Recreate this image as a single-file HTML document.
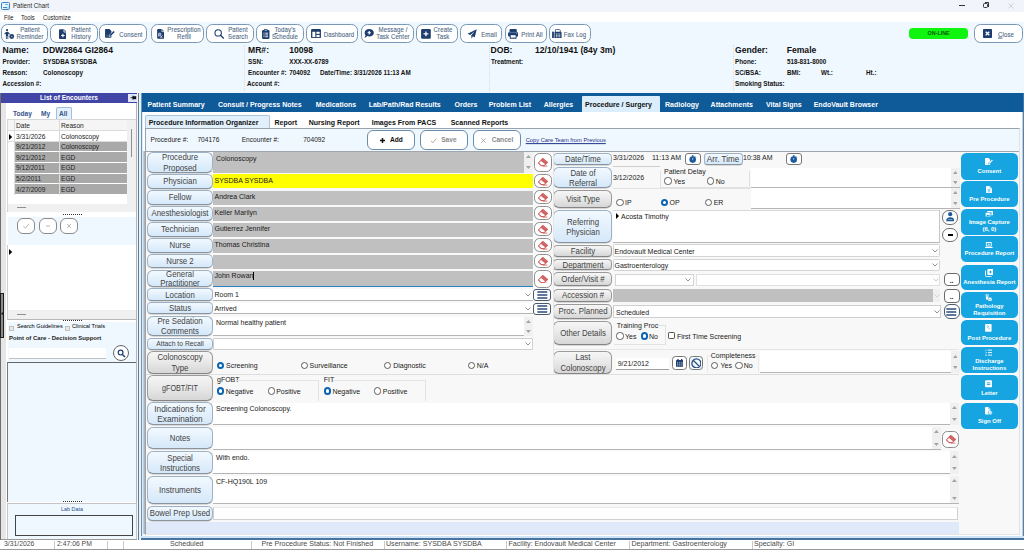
<!DOCTYPE html><html><head><meta charset="utf-8"><title>Patient Chart</title><style>
*{box-sizing:border-box;margin:0;padding:0}
html,body{width:1024px;height:550px;overflow:hidden;background:#f0f8ff;font-family:"Liberation Sans",sans-serif;}
body{position:relative}
div,span{position:absolute}
span{white-space:nowrap;transform:translateY(-50%);line-height:1;color:#1a1a1a}
.t{font-size:7px}
.b{font-weight:bold}
.tb{background:#fff;border:1px solid #7a97b3;border-radius:6.5px}
.tbt{font-size:6.5px;color:#4d6985;-webkit-text-stroke:0.1px #4d6985;letter-spacing:.12px;text-align:center;line-height:6.9px;transform:translate(-50%,-50%) scaleX(.93)}
.h1{font-size:8.6px;font-weight:bold;color:#111}
.h2{font-size:6.3px;font-weight:bold;color:#111}
.mt{font-size:7px;font-weight:bold;color:#fff}
.st{font-size:7px;font-weight:bold;color:#111}
.lb{background:linear-gradient(#f2f9ff,#e5f1fc 45%,#d5e8f9);border:1px solid #9db1c6;border-bottom-color:#8a949e;border-radius:6px;box-shadow:0 .6px 0 rgba(140,140,140,.55)}
.lg{background:linear-gradient(#f6f6f6,#e8e8e8 50%,#d6d6d6);border:1px solid #9a9a9a;border-bottom-color:#858585;border-radius:6px;box-shadow:0 .6px 0 rgba(130,130,130,.55)}
.lt{font-size:8.7px;color:#424242;text-align:center;line-height:10.2px;transform:translate(-50%,-50%) scaleX(.9)}
.fg{background:#c0c0c0}
.fw{background:#fff;border-bottom:1px solid #b5b5b5}
.er{background:#fff;border:1px solid #8e8e8e;border-radius:5.5px}
.sb{background:#16a5e0;border-radius:5.5px}
.sbt{font-size:5.9px;font-weight:bold;color:#fff;text-align:center;line-height:6.4px;transform:translate(-50%,-50%)}
.rad{border:.75px solid #5c5c5c;border-radius:50%;background:#fff}
.radc{border:2.2px solid #0a64b4;border-radius:50%;background:#fff}
.sc{background:#f0f0f0}
.ar{font-size:5.6px;color:#a6a6a6;transform:translate(-50%,-50%) scaleY(.75) !important}
</style></head><body>
<div class="" style="left:0px;top:0px;width:1024px;height:12px;background:#f1f4fa"></div>
<div class="" style="left:1px;top:1.8px;width:8.8px;height:8.4px;border:1px solid #3a86c4;border-radius:1.6px;background:linear-gradient(135deg,#cfeaff,#f4fbff 50%,#9fd0f0)"></div>
<div class="" style="left:2.6px;top:6.6px;width:4.4px;height:1px;background:#3a86c4"></div>
<div class="" style="left:5.4px;top:4px;width:2.4px;height:1px;background:#6ab0e0"></div>
<span class="t" style="left:12.6px;top:6.2px;font-size:6.7px;color:#2a2a2a;transform-origin:0 50%;transform:translateY(-50%) scaleX(.92)">Patient Chart</span>
<div class="" style="left:959.4px;top:5px;width:5.4px;height:0.8px;background:#333"></div>
<div class="" style="left:983px;top:3.4px;width:5px;height:4.6px;border:1px solid #333;border-radius:1.4px"></div>
<div class="" style="left:984.6px;top:2.4px;width:4.6px;height:4.4px;border-top:1px solid #333;border-right:1px solid #333;border-radius:0 1.4px 0 0"></div>
<svg style="position:absolute;left:1008px;top:3px" width="6" height="6"><path d="M0.4 0.4L5.4 5.4M5.4 0.4L0.4 5.4" stroke="#c4c4c4" stroke-width="0.8"/></svg>
<div class="" style="left:0px;top:11.8px;width:1024px;height:10.5px;background:#fff"></div>
<span class="t" style="left:3.8px;top:17.5px;font-size:6.7px;color:#222;transform-origin:0 50%;transform:translateY(-50%) scaleX(.88)">File</span>
<span class="t" style="left:21.4px;top:17.5px;font-size:6.7px;color:#222;transform-origin:0 50%;transform:translateY(-50%) scaleX(.88)">Tools</span>
<span class="t" style="left:42.8px;top:17.5px;font-size:6.7px;color:#222;transform-origin:0 50%;transform:translateY(-50%) scaleX(.88)">Customize</span>
<div class="tb" style="left:0.5px;top:24.1px;width:47.4px;height:18.7px;"></div>
<span class="tbt" style="left:29.8px;top:33.8px;">Patient<br>Reminder</span>
<svg style="position:absolute;left:4.2px;top:28.6px" width="10.4" height="10" viewBox="0 0 21 20"><circle cx="6.2" cy="2.2" r="2.1" fill="#1d3d6e"/><path d="M0.4 9.6L3.4 6.4Q6.2 4.6 9 6.4L12 9.6L10.4 10.8L8.6 9V20H6.9V14H5.5V20H3.8V9L2 10.8Z" fill="#1d3d6e"/><circle cx="15.6" cy="15" r="4.9" fill="#1d3d6e"/><circle cx="15.6" cy="15" r="1.7" fill="#93a6c4"/></svg>
<div class="tb" style="left:49.6px;top:24.1px;width:48.1px;height:18.7px;"></div>
<span class="tbt" style="left:81px;top:33.8px;">Patient<br>History</span>
<svg style="position:absolute;left:58.6px;top:28.6px" width="7.8" height="10.2" viewBox="0 0 16 20"><path d="M2 0H10L16 6V18A2 2 0 0 1 14 20H2A2 2 0 0 1 0 18V2A2 2 0 0 1 2 0Z" fill="#1d3d6e"/><path d="M10.2 0.6V5.8H15.4" fill="none" stroke="#fff" stroke-width="1.6"/><path d="M8 9.5V16.5M4.5 13H11.5" stroke="#fff" stroke-width="2.2"/></svg>
<div class="tb" style="left:99.3px;top:24.1px;width:47.8px;height:18.7px;"></div>
<span class="tbt" style="left:130.5px;top:34.5px;">Consent</span>
<svg style="position:absolute;left:105px;top:29.4px" width="10.4" height="8.8" viewBox="0 0 21 18"><path d="M1.6 0H9L13 4V16.4A1.6 1.6 0 0 1 11.4 18H1.6A1.6 1.6 0 0 1 0 16.4V1.6A1.6 1.6 0 0 1 1.6 0Z" fill="#1d3d6e"/><path d="M8.4 15.8L9.4 11.6L17.6 3.4L20.4 6.2L12.2 14.4Z" fill="#1d3d6e" stroke="#fff" stroke-width="1"/><path d="M2 14.6C3.4 12 4.4 15.4 5.6 13.4S7 15 8 14.2" fill="none" stroke="#9fb2d0" stroke-width="1"/></svg>
<div class="tb" style="left:151.4px;top:24.1px;width:52.9px;height:18.7px;"></div>
<span class="tbt" style="left:183.5px;top:33.8px;">Prescription<br>Refill</span>
<svg style="position:absolute;left:156.9px;top:29px" width="7.5" height="9.7" viewBox="0 0 15 20"><path d="M2 0H9.5L15 5.5V18A2 2 0 0 1 13 20H2A2 2 0 0 1 0 18V2A2 2 0 0 1 2 0Z" fill="#1d3d6e"/><path d="M9.8 0.6V5.4H14.6" fill="none" stroke="#fff" stroke-width="1.4"/><path d="M3.4 16V8.6H6A2 2 0 0 1 6 12.6H3.4M5.6 12.6L10.8 18.2M10.8 13.4L6.8 18.2" fill="none" stroke="#fff" stroke-width="1.5"/></svg>
<div class="tb" style="left:206.4px;top:24.1px;width:47.9px;height:18.7px;"></div>
<span class="tbt" style="left:237.8px;top:33.8px;">Patient<br>Search</span>
<svg style="position:absolute;left:213.9px;top:29px" width="10.3" height="9.7" viewBox="0 0 20 20"><circle cx="8" cy="8" r="6.6" fill="none" stroke="#1d3d6e" stroke-width="2.2"/><path d="M12.8 12.8L19 19" stroke="#1d3d6e" stroke-width="2.6" stroke-linecap="round"/></svg>
<div class="tb" style="left:256.3px;top:24.1px;width:47.4px;height:18.7px;"></div>
<span class="tbt" style="left:285.4px;top:33.8px;"><u>T</u>oday's<br>Schedule</span>
<svg style="position:absolute;left:262px;top:29px" width="7.5" height="9.9" viewBox="0 0 15 20"><rect x="0" y="2" width="15" height="18" rx="2.4" fill="#1d3d6e"/><rect x="4" y="0" width="7" height="4.4" rx="1.4" fill="#1d3d6e"/><rect x="5.4" y="1.6" width="4.2" height="1.6" fill="#fff"/><path d="M3 8.4H5M6.6 8.4H12M3 12H5M6.6 12H12M3 15.6H5M6.6 15.6H12" stroke="#fff" stroke-width="1.8"/></svg>
<div class="tb" style="left:305.8px;top:24.1px;width:52.4px;height:18.7px;"></div>
<span class="tbt" style="left:339px;top:34.5px;">Dashboard</span>
<svg style="position:absolute;left:311.1px;top:29px" width="10" height="9.4" viewBox="0 0 20 19"><rect x="0" y="0" width="20" height="19" rx="2.6" fill="#1d3d6e"/><rect x="2.6" y="5.6" width="6" height="10.8" fill="#fff"/><rect x="10.8" y="5.6" width="6.6" height="4.2" fill="#fff"/><rect x="10.8" y="12" width="6.6" height="4.4" fill="#fff"/></svg>
<div class="tb" style="left:360.5px;top:24.1px;width:53.0px;height:18.7px;"></div>
<span class="tbt" style="left:393px;top:33.8px;">Message /<br>Task Center</span>
<svg style="position:absolute;left:364.3px;top:29.3px" width="9.9" height="8.8" viewBox="0 0 20 18"><path d="M10.6 0C15.8 0 20 3.4 20 7.6S15.8 15.2 10.6 15.2C9.2 15.2 7.9 15 6.7 14.5C5.4 16 3.2 17.6 0.6 17.8C2 16.4 2.8 14.6 3 13C1.8 11.6 1.2 9.7 1.2 7.6C1.2 3.4 5.4 0 10.6 0Z" fill="#1d3d6e"/><path d="M10.6 4.2V11M7.2 7.6H14" stroke="#fff" stroke-width="2.4"/></svg>
<div class="tb" style="left:415.5px;top:24.1px;width:42.5px;height:18.7px;"></div>
<span class="tbt" style="left:443px;top:33.8px;">Create<br>Task</span>
<svg style="position:absolute;left:420.9px;top:29px" width="9.9" height="9.7" viewBox="0 0 20 20"><rect x="0" y="0" width="20" height="20" rx="2.6" fill="#1d3d6e"/><path d="M10 5V15M5 10H15" stroke="#fff" stroke-width="2.6"/></svg>
<div class="tb" style="left:460.1px;top:24.1px;width:42.4px;height:18.7px;"></div>
<span class="tbt" style="left:488.5px;top:34.5px;">Email</span>
<svg style="position:absolute;left:466.5px;top:29px" width="10.2" height="9.7" viewBox="0 0 20 20"><path d="M19.6 0.4L0.6 9.6L6.2 12.2L15.4 4.4L8.2 13.4L8.8 19.6L11.8 15.2L15.4 17.4Z" fill="#1d3d6e"/></svg>
<div class="tb" style="left:504.5px;top:24.1px;width:42.2px;height:18.7px;"></div>
<span class="tbt" style="left:531.6px;top:34.5px;">Print All</span>
<svg style="position:absolute;left:508px;top:29px" width="10.3" height="9.7" viewBox="0 0 21 20"><path d="M4.4 0H16.6L18 1.8V6H3V1.8Z" fill="#1d3d6e"/><rect x="0" y="6.6" width="21" height="9" rx="2.4" fill="#1d3d6e"/><rect x="3.4" y="11" width="14.2" height="9" rx="1" fill="#1d3d6e"/><rect x="5.4" y="12.8" width="10.2" height="5" fill="#fff"/><circle cx="17.6" cy="9" r="0.9" fill="#fff"/></svg>
<div class="tb" style="left:548.5px;top:24.1px;width:42.3px;height:18.7px;"></div>
<span class="tbt" style="left:575.3px;top:34.5px;">Fax Log</span>
<svg style="position:absolute;left:552.3px;top:28.7px" width="9.7" height="9.5" viewBox="0 0 20 20"><rect x="0" y="5" width="3.8" height="15" rx="1.4" fill="#1d3d6e"/><path d="M7 6V2.4A1.8 1.8 0 0 1 8.8 0.8H15L17.2 3V6" fill="none" stroke="#1d3d6e" stroke-width="1.8"/><rect x="5" y="6" width="15" height="14" rx="1.8" fill="#1d3d6e"/><path d="M8 10.4H10.4M11.4 10.4H13.8M14.8 10.4H17.2M8 13.4H10.4M11.4 13.4H13.8M14.8 13.4H17.2M8 16.4H10.4M11.4 16.4H13.8M14.8 16.4H17.2" stroke="#fff" stroke-width="1.6"/></svg>
<div class="tb" style="left:974px;top:24.1px;width:48.9px;height:18.7px;"></div>
<span class="tbt" style="left:1006px;top:34.5px;"><u>C</u>lose</span>
<svg style="position:absolute;left:982.5px;top:29.2px" width="9" height="9" viewBox="0 0 18 18"><rect x="0" y="0" width="18" height="18" rx="1.6" fill="#1d3d6e"/><path d="M5.4 5.4L12.6 12.6M12.6 5.4L5.4 12.6" stroke="#fff" stroke-width="2.6"/></svg>
<div class="" style="left:909px;top:28.2px;width:58.6px;height:10.5px;background:#10f510;border-radius:4px"></div>
<span class="t" style="left:938.6px;top:34.2px;font-size:5.35px;font-weight:bold;color:#0a5a0a;transform:translate(-50%,-50%)">ON-LINE</span>
<span class="h1" style="left:2.5px;top:49.8px;">Name:</span>
<span class="h1" style="left:42.7px;top:49.8px;">DDW2864 GI2864</span>
<span class="h2" style="left:2.5px;top:61.8px;">Provider:</span>
<span class="h2" style="left:43px;top:61.8px;">SYSDBA SYSDBA</span>
<span class="h2" style="left:2.5px;top:72.7px;">Reason:</span>
<span class="h2" style="left:43px;top:72.7px;">Colonoscopy</span>
<span class="h2" style="left:2.5px;top:83.5px;">Accession #:</span>
<span class="h1" style="left:248px;top:49.8px;">MR#:</span>
<span class="h1" style="left:289.2px;top:49.8px;">10098</span>
<span class="h2" style="left:248px;top:61.8px;">SSN:</span>
<span class="h2" style="left:289.2px;top:61.8px;">XXX-XX-6789</span>
<span class="h2" style="left:248px;top:72.7px;">Encounter #:</span>
<span class="h2" style="left:289.2px;top:72.7px;">704092</span>
<span class="h2" style="left:320px;top:72.7px;">Date/Time: 3/31/2026 11:13 AM</span>
<span class="h2" style="left:247px;top:83.5px;">Account #:</span>
<span class="h1" style="left:490.5px;top:49.8px;">DOB:</span>
<span class="h1" style="left:535px;top:49.8px;">12/10/1941 (84y 3m)</span>
<span class="h2" style="left:491px;top:61.8px;">Treatment:</span>
<span class="h1" style="left:735px;top:49.8px;">Gender:</span>
<span class="h1" style="left:786.7px;top:49.8px;">Female</span>
<span class="h2" style="left:735px;top:61.8px;">Phone:</span>
<span class="h2" style="left:787px;top:61.8px;">518-831-8000</span>
<span class="h2" style="left:735px;top:72.7px;">SC/BSA:</span>
<span class="h2" style="left:787px;top:72.7px;">BMI:</span>
<span class="h2" style="left:821px;top:72.7px;">Wt.:</span>
<span class="h2" style="left:866px;top:72.7px;">Ht.:</span>
<span class="h2" style="left:735px;top:83.5px;">Smoking Status:</span>
<div class="" style="left:244px;top:45px;width:1px;height:46px;border-left:1px dotted #d4dde8"></div>
<div class="" style="left:488.5px;top:45px;width:1px;height:46px;border-left:1px dotted #d4dde8"></div>
<div class="" style="left:732.5px;top:45px;width:1px;height:46px;border-left:1px dotted #d4dde8"></div>
<div class="" style="left:0px;top:93px;width:1.2px;height:447px;background:#6e6e6e"></div>
<div class="" style="left:1px;top:93px;width:5px;height:447px;background:#e6e6e6"></div>
<div class="" style="left:6px;top:103px;width:132px;height:437px;background:#fff"></div>
<div class="" style="left:0.6px;top:93px;width:137.8px;height:10px;background:#4146a6"></div>
<span class="t" style="left:69px;top:98px;font-size:6.6px;font-weight:bold;color:#fff;transform:translate(-50%,-50%)">List of Encounters</span>
<div class="" style="left:128px;top:94px;width:9.6px;height:7.6px;background:#e0e4f8"></div>
<svg style="position:absolute;left:129.6px;top:95.2px" width="7" height="5.4" viewBox="0 0 7 5.4"><path d="M0.6 2.6H3M2.8 0.6V4.8" stroke="#111" stroke-width="0.8"/><rect x="3" y="1.2" width="3.2" height="3" fill="#111"/></svg>
<span class="t" style="left:13px;top:113.5px;font-size:6.6px;font-weight:bold;color:#34548a">Today</span>
<span class="t" style="left:41px;top:113.5px;font-size:6.6px;font-weight:bold;color:#34548a">My</span>
<div class="" style="left:56px;top:107px;width:16px;height:13px;background:#e4f0fb;border:1px solid #9cc0e0;border-bottom:none;border-radius:2px 2px 0 0"></div>
<span class="t" style="left:59px;top:113.5px;font-size:6.6px;font-weight:bold;color:#34548a">All</span>
<div class="" style="left:7px;top:119px;width:130px;height:93px;border:1px solid #d6d6d6;border-bottom-color:#bcbcbc;background:#fff"></div>
<div class="" style="left:8px;top:120px;width:128px;height:11px;background:#f5f5f5;border-bottom:1px solid #dcdcdc"></div>
<span class="t" style="left:16px;top:125.5px;font-size:6.6px;color:#222">Date</span>
<span class="t" style="left:61px;top:125.5px;font-size:6.6px;color:#222">Reason</span>
<span class="t" style="left:16px;top:136.7px;font-size:6.6px;color:#222">3/31/2026</span>
<span class="t" style="left:61px;top:136.7px;font-size:6.6px;color:#222">Colonoscopy</span>
<div class="" style="left:8px;top:141px;width:119px;height:1px;background:#dcdcdc"></div>
<div class="" style="left:14.5px;top:142px;width:44.5px;height:9px;background:#a9a9a9"></div>
<div class="" style="left:60px;top:142px;width:67px;height:9px;background:#a9a9a9"></div>
<span class="t" style="left:16px;top:147.28px;font-size:6.6px;color:#222">9/21/2012</span>
<span class="t" style="left:61px;top:147.28px;font-size:6.6px;color:#222">Colonoscopy</span>
<div class="" style="left:14.5px;top:152px;width:44.5px;height:10px;background:#a9a9a9"></div>
<div class="" style="left:60px;top:152px;width:67px;height:10px;background:#a9a9a9"></div>
<span class="t" style="left:16px;top:157.85999999999999px;font-size:6.6px;color:#222">9/21/2012</span>
<span class="t" style="left:61px;top:157.85999999999999px;font-size:6.6px;color:#222">EGD</span>
<div class="" style="left:14.5px;top:163px;width:44.5px;height:10px;background:#a9a9a9"></div>
<div class="" style="left:60px;top:163px;width:67px;height:10px;background:#a9a9a9"></div>
<span class="t" style="left:16px;top:168.44px;font-size:6.6px;color:#222">9/12/2011</span>
<span class="t" style="left:61px;top:168.44px;font-size:6.6px;color:#222">EGD</span>
<div class="" style="left:14.5px;top:174px;width:44.5px;height:9px;background:#a9a9a9"></div>
<div class="" style="left:60px;top:174px;width:67px;height:9px;background:#a9a9a9"></div>
<span class="t" style="left:16px;top:179.01999999999998px;font-size:6.6px;color:#222">5/2/2011</span>
<span class="t" style="left:61px;top:179.01999999999998px;font-size:6.6px;color:#222">EGD</span>
<div class="" style="left:14.5px;top:184px;width:44.5px;height:10px;background:#a9a9a9"></div>
<div class="" style="left:60px;top:184px;width:67px;height:10px;background:#a9a9a9"></div>
<span class="t" style="left:16px;top:189.6px;font-size:6.6px;color:#222">4/27/2009</span>
<span class="t" style="left:61px;top:189.6px;font-size:6.6px;color:#222">EGD</span>
<div class="" style="left:14px;top:120px;width:0.6px;height:75px;background:#dcdcdc"></div>
<div class="" style="left:59px;top:120px;width:0.6px;height:75px;background:#dcdcdc"></div>
<svg style="position:absolute;left:9px;top:133.5px" width="4" height="6"><path d="M0 0L3.2 3L0 6Z" fill="#000"/></svg>
<div class="" style="left:127px;top:120px;width:9px;height:84px;background:#f0f0f0"></div>
<div class="" style="left:131px;top:129px;width:1px;height:28px;background:#909090"></div>
<div class="" style="left:8px;top:204px;width:128px;height:8px;background:#f0f0f0"></div>
<div class="" style="left:17px;top:207px;width:9px;height:1px;background:#909090"></div>
<div class="" style="left:63px;top:213.7px;width:19px;height:1px;border-top:1px dotted #333"></div>
<div class="" style="left:8px;top:217px;width:128px;height:28.4px;background:#f0f8ff"></div>
<div class="" style="left:17px;top:218px;width:18px;height:16px;background:#fff;border:1px solid #8a8a8a;border-radius:6px"></div>
<svg style="position:absolute;left:21px;top:221px" width="10" height="10"><path d="M2.4 5.2L4.4 7.2L8 2.8" fill="none" stroke="#b0b0b0" stroke-width="0.9"/></svg>
<div class="" style="left:39px;top:218px;width:18px;height:16px;background:#fff;border:1px solid #8a8a8a;border-radius:6px"></div>
<svg style="position:absolute;left:43px;top:221px" width="10" height="10"><path d="M3 5H7" fill="none" stroke="#b0b0b0" stroke-width="0.9"/></svg>
<div class="" style="left:60px;top:218px;width:18px;height:16px;background:#fff;border:1px solid #8a8a8a;border-radius:6px"></div>
<svg style="position:absolute;left:64px;top:221px" width="10" height="10"><path d="M3 3L7 7M7 3L3 7" fill="none" stroke="#b0b0b0" stroke-width="0.9"/></svg>
<svg style="position:absolute;left:9px;top:248.5px" width="4" height="6"><path d="M0 0L3.2 3L0 6Z" fill="#000"/></svg>
<div class="" style="left:7px;top:245.4px;width:130px;height:74.4px;border:1px solid #cdcdcd;border-top:none;border-bottom-color:#b8b8b8"></div>
<div class="" style="left:8px;top:310px;width:128px;height:9px;background:#f0f0f0"></div>
<div class="" style="left:17px;top:313.5px;width:9px;height:1px;background:#909090"></div>
<div class="" style="left:63px;top:319.7px;width:19px;height:1px;border-top:1px dotted #333"></div>
<div class="" style="left:8px;top:322px;width:128px;height:218px;background:#f0f8ff"></div>
<div class="" style="left:9px;top:326px;width:4.5px;height:4.5px;background:#e8e8e8;border:1px solid #c0c0c0"></div>
<span class="t" style="left:17px;top:326.5px;font-size:5.6px;color:#000">Search Guidelines</span>
<div class="" style="left:65px;top:326px;width:4.5px;height:4.5px;background:#e8e8e8;border:1px solid #c0c0c0"></div>
<span class="t" style="left:72px;top:326.5px;font-size:5.6px;color:#000">Clinical Trials</span>
<span class="t" style="left:9px;top:337.5px;font-size:6px;font-weight:bold;color:#222">Point of Care - Decision Support</span>
<div class="" style="left:9px;top:348px;width:97px;height:10.5px;background:#fff;border-bottom:1px solid #c0c0c0"></div>
<div class="" style="left:113px;top:345px;width:16px;height:16px;background:#fff;border:1px solid #666;border-radius:50%"></div>
<svg style="position:absolute;left:116.5px;top:348.5px" width="9" height="9" viewBox="0 0 9 9"><circle cx="3.6" cy="3.6" r="2.4" fill="none" stroke="#1d3f73" stroke-width="1.2"/><path d="M5.4 5.4L8 8" stroke="#1d3f73" stroke-width="1.4"/></svg>
<div class="" style="left:7px;top:362px;width:130px;height:142px;border:1px solid #777;border-bottom:none;border-top:1px solid #666;background:#f0f8ff"></div>
<div class="" style="left:63px;top:500.7px;width:19px;height:1px;border-top:1px dotted #333"></div>
<div class="" style="left:7px;top:501.6px;width:130px;height:1.6px;background:#fff"></div>
<div class="" style="left:7px;top:503px;width:130px;height:37px;border:1px solid #c4c4c8;background:#f0f8ff"></div>
<span class="t" style="left:72px;top:510px;font-size:5.4px;color:#2a4f8f;transform:translate(-50%,-50%)">Lab Data</span>
<div class="" style="left:15px;top:515px;width:118px;height:21px;border:1px solid #444;background:#f0f8ff"></div>
<div class="" style="left:1.2px;top:539px;width:137px;height:1px;background:#9a9a9a"></div>
<div class="" style="left:136px;top:103px;width:1px;height:400px;background:#b4b4bc"></div>
<div class="" style="left:137px;top:93px;width:1px;height:447px;background:#f4f4fb"></div>
<div class="" style="left:138px;top:93px;width:1px;height:447px;background:#6a7a88"></div>
<div class="" style="left:139px;top:93px;width:2px;height:447px;background:#dff5ff"></div>
<div class="" style="left:0px;top:293px;width:4.2px;height:45px;background:#8c8c8c;border:1px solid #1e1e1e;border-left-width:.8px"></div>
<svg style="position:absolute;left:1.2px;top:312.4px" width="2" height="3.2"><path d="M2 0L0 1.6L2 3.2Z" fill="#222"/></svg>
<div class="" style="left:141px;top:93px;width:883px;height:447px;background:#fff"></div>
<div class="" style="left:141px;top:93px;width:1px;height:447px;background:#6f93b3"></div>
<div class="" style="left:1022px;top:93px;width:1px;height:447px;background:#b8cfe4"></div>
<div class="" style="left:1023px;top:93px;width:1px;height:447px;background:#5f80a0"></div>
<div class="" style="left:141px;top:536px;width:883px;height:2px;background:#cfe4f6"></div>
<div class="" style="left:141px;top:538px;width:883px;height:2px;background:#4a74a0"></div>
<div class="" style="left:142px;top:112px;width:1.4px;height:424px;background:#dcebf8"></div>
<div class="" style="left:143.4px;top:151px;width:3px;height:383px;background:linear-gradient(90deg,#d4d8dc,#8c9098)"></div>
<div class="" style="left:1020px;top:128px;width:2px;height:408px;background:#f4f8fc"></div>
<div class="" style="left:141.6px;top:93px;width:881.4px;height:19px;background:#0f5a99"></div>
<div class="" style="left:1023px;top:93px;width:1px;height:19px;background:#3a78b4"></div>
<span class="mt" style="left:147.5px;top:104.2px;">Patient Summary</span>
<span class="mt" style="left:218px;top:104.2px;">Consult / Progress Notes</span>
<span class="mt" style="left:315.7px;top:104.2px;">Medications</span>
<span class="mt" style="left:368.7px;top:104.2px;">Lab/Path/Rad Results</span>
<span class="mt" style="left:454.5px;top:104.2px;">Orders</span>
<span class="mt" style="left:488.7px;top:104.2px;">Problem List</span>
<span class="mt" style="left:543.7px;top:104.2px;">Allergies</span>
<div class="" style="left:581.5px;top:95.5px;width:78.5px;height:16.5px;background:#dceefb;border-radius:1px 1px 0 0"></div>
<span class="mt" style="left:585px;top:104.2px;color:#111">Procedure / Surgery</span>
<span class="mt" style="left:665px;top:104.2px;">Radiology</span>
<span class="mt" style="left:710.6px;top:104.2px;">Attachments</span>
<span class="mt" style="left:766px;top:104.2px;">Vital Signs</span>
<span class="mt" style="left:813.7px;top:104.2px;">EndoVault Browser</span>
<div class="" style="left:143px;top:112px;width:878px;height:16px;background:#fff"></div>
<div class="" style="left:145px;top:115px;width:124.5px;height:13px;background:#e2f0fb;border:1px solid #a8c4de;border-bottom:none;border-radius:2px 2px 0 0"></div>
<span class="st" style="left:148.7px;top:122px;">Procedure Information Organizer</span>
<span class="st" style="left:274.5px;top:122px;">Report</span>
<span class="st" style="left:308.7px;top:122px;">Nursing Report</span>
<span class="st" style="left:371.7px;top:122px;">Images From PACS</span>
<span class="st" style="left:450.7px;top:122px;">Scanned Reports</span>
<div class="" style="left:145px;top:128px;width:875px;height:407px;border:1px solid #9aa2ac;border-right-color:#dfe3e7;border-bottom-color:#e2e4e6;background:#f0f8ff"></div>
<span class="t" style="left:150.5px;top:139.5px;font-size:6.6px">Procedure #:</span>
<span class="t" style="left:197.4px;top:139.5px;font-size:6.6px">704176</span>
<span class="t" style="left:241.7px;top:139.5px;font-size:6.6px">Encounter #:</span>
<span class="t" style="left:303.2px;top:139.5px;font-size:6.6px">704092</span>
<div class="" style="left:367px;top:130px;width:47.5px;height:19.5px;background:#fff;border:1px solid #6a8dac;border-radius:6px"></div>
<svg style="position:absolute;left:379.5px;top:137.5px;overflow:visible" width="5.5" height="5"><path d="M2.5 0V5M0 2.5H5" fill="none" stroke="#111" stroke-width="1.5"/></svg>
<span class="t" style="left:390px;top:140.1px;font-size:6.6px;font-weight:bold;color:#111">Add</span>
<div class="" style="left:420px;top:130px;width:48px;height:19.5px;background:#fff;border:1px solid #6a8dac;border-radius:6px"></div>
<svg style="position:absolute;left:430.7px;top:137.5px;overflow:visible" width="5.5" height="5"><path d="M0 2.8L1.8 4.8L5.4 0.4" fill="none" stroke="#9a9a9a" stroke-width="0.8"/></svg>
<span class="t" style="left:441.2px;top:140.1px;font-size:6.6px;font-weight:bold;color:#8a8a8a">Save</span>
<div class="" style="left:473px;top:130px;width:47.7px;height:19.5px;background:#fff;border:1px solid #6a8dac;border-radius:6px"></div>
<svg style="position:absolute;left:481.2px;top:137.5px;overflow:visible" width="5.5" height="5"><path d="M0.3 0.3L4.7 4.7M4.7 0.3L0.3 4.7" fill="none" stroke="#9a9a9a" stroke-width="0.8"/></svg>
<span class="t" style="left:491.7px;top:140.1px;font-size:6.6px;font-weight:bold;color:#8a8a8a">Cancel</span>
<span class="t" style="left:525.7px;top:141px;font-size:5.75px;color:#1c2f8a;text-decoration:underline;text-decoration-thickness:.5px;text-underline-offset:.6px">Copy Care Team from Previous</span>
<div class="" style="left:146px;top:151px;width:873px;height:383px;background:#f8f8f8;border-top:1px solid #a0a6ac"></div>
<div class="" style="left:146px;top:522px;width:813px;height:11.5px;background:#dfe9f9"></div>
<div class="lb" style="left:147px;top:152px;width:65.8px;height:20.6px;overflow:hidden;border-radius:6px;"><span class="lt" style="left:31.9px;top:9.3px;">Procedure<br>Proposed</span></div>
<div class="lb" style="left:147px;top:174px;width:65.8px;height:14.7px;overflow:hidden;border-radius:5.3px;"><span class="lt" style="left:31.9px;top:6.35px;">Physician</span></div>
<div class="lb" style="left:147px;top:190.2px;width:65.8px;height:14.4px;overflow:hidden;border-radius:5.2px;"><span class="lt" style="left:31.9px;top:6.2px;">Fellow</span></div>
<div class="lb" style="left:147px;top:206.2px;width:65.8px;height:14.4px;overflow:hidden;border-radius:5.2px;"><span class="lt" style="left:31.9px;top:6.2px;">Anesthesiologist</span></div>
<div class="lb" style="left:147px;top:222.2px;width:65.8px;height:14.4px;overflow:hidden;border-radius:5.2px;"><span class="lt" style="left:31.9px;top:6.2px;transform:translate(-50%,-50%) scaleX(0.93);">Technician</span></div>
<div class="lb" style="left:147px;top:238.2px;width:65.8px;height:14.4px;overflow:hidden;border-radius:5.2px;"><span class="lt" style="left:31.9px;top:6.2px;">Nurse</span></div>
<div class="lb" style="left:147px;top:254.2px;width:65.8px;height:14.3px;overflow:hidden;border-radius:5.1px;"><span class="lt" style="left:31.9px;top:6.15px;">Nurse 2</span></div>
<div class="lb" style="left:147px;top:270px;width:65.8px;height:17.2px;overflow:hidden;border-radius:6px;"><span class="lt" style="left:31.9px;top:7.699999999999999px;line-height:9px;font-size:8.3px;transform:translate(-50%,-50%) scaleX(.94);">General<br>Practitioner</span></div>
<div class="lb" style="left:147px;top:288.4px;width:65.8px;height:12.6px;overflow:hidden;border-radius:4.5px;"><span class="lt" style="left:31.9px;top:5.3px;">Location</span></div>
<div class="lb" style="left:147px;top:302.4px;width:65.8px;height:12.0px;overflow:hidden;border-radius:4.3px;"><span class="lt" style="left:31.9px;top:5.0px;">Status</span></div>
<div class="lb" style="left:147px;top:316px;width:65.8px;height:20px;overflow:hidden;border-radius:6px;"><span class="lt" style="left:31.9px;top:9.0px;">Pre Sedation<br>Comments</span></div>
<div class="lb" style="left:147px;top:337.6px;width:65.8px;height:12.0px;overflow:hidden;border-radius:4.3px;"><span class="lt" style="left:31.9px;top:5.0px;font-size:7.5px;">Attach to Recall</span></div>
<div class="lg" style="left:147px;top:351px;width:65.8px;height:22.6px;overflow:hidden;border-radius:6px;"><span class="lt" style="left:31.9px;top:10.3px;">Colonoscopy<br>Type</span></div>
<div class="lg" style="left:147px;top:375.4px;width:65.8px;height:25.2px;overflow:hidden;border-radius:6px;"><span class="lt" style="left:31.9px;top:11.6px;transform:translate(-50%,-50%) scaleX(0.83);">gFOBT/FIT</span></div>
<div class="lb" style="left:147px;top:402.4px;width:65.8px;height:22.6px;overflow:hidden;border-radius:6px;"><span class="lt" style="left:31.9px;top:10.3px;transform:translate(-50%,-50%) scaleX(0.95);">Indications for<br>Examination</span></div>
<div class="lb" style="left:147px;top:426.6px;width:65.8px;height:22.8px;overflow:hidden;border-radius:6px;"><span class="lt" style="left:31.9px;top:10.4px;">Notes</span></div>
<div class="lb" style="left:147px;top:451px;width:65.8px;height:23px;overflow:hidden;border-radius:6px;"><span class="lt" style="left:31.9px;top:10.5px;">Special<br>Instructions</span></div>
<div class="lb" style="left:147px;top:475.6px;width:65.8px;height:28.0px;overflow:hidden;border-radius:6px;"><span class="lt" style="left:31.9px;top:13.0px;transform:translate(-50%,-50%) scaleX(0.925);">Instruments</span></div>
<div class="lb" style="left:147px;top:505.6px;width:65.8px;height:15.0px;overflow:hidden;border-radius:5.4px;"><span class="lt" style="left:31.9px;top:6.5px;">Bowel Prep Used</span></div>
<div class="fg" style="left:213px;top:152px;width:311px;height:20.5px;"></div>
<span class="t" style="left:216px;top:157.8px;">Colonoscopy</span>
<div class="sc" style="left:523.5px;top:152px;width:9.5px;height:20.5px;"></div>
<svg style="position:absolute;left:525.85px;top:155.3px" width="4.8" height="3" viewBox="0 0 48 30"><path d="M0 30L24 0L48 30Z" fill="#a2a2a2"/></svg>
<svg style="position:absolute;left:525.85px;top:166.1px" width="4.8" height="3" viewBox="0 0 48 30"><path d="M0 0L24 30L48 0Z" fill="#a2a2a2"/></svg>
<div class="" style="left:213px;top:174px;width:320px;height:14px;background:#ffff00"></div>
<span class="t" style="left:214.5px;top:179.7px;">SYSDBA SYSDBA</span>
<div class="fg" style="left:213px;top:191px;width:320px;height:13.5px;"></div>
<span class="t" style="left:214.5px;top:196px;">Andrea Clark</span>
<div class="fg" style="left:213px;top:207px;width:320px;height:13.5px;"></div>
<span class="t" style="left:214.5px;top:212px;">Keller Marilyn</span>
<div class="fg" style="left:213px;top:223px;width:320px;height:13.5px;"></div>
<span class="t" style="left:214.5px;top:228px;">Gutierrez Jennifer</span>
<div class="fg" style="left:213px;top:239px;width:320px;height:13.5px;"></div>
<span class="t" style="left:214.5px;top:244px;">Thomas Christina</span>
<div class="fg" style="left:213px;top:255px;width:320px;height:13.5px;"></div>
<div class="fg" style="left:213px;top:271px;width:320px;height:15.5px;border-bottom:1px solid #2a7fc0"></div>
<span class="t" style="left:214.5px;top:275.4px;">John Rowan</span>
<div class="" style="left:252.6px;top:272.3px;width:0.7px;height:7.6px;background:#000"></div>
<div class="fw" style="left:213px;top:289px;width:320px;height:12px;"></div>
<span class="t" style="left:214.5px;top:293.6px;">Room 1</span>
<div class="fw" style="left:213px;top:303px;width:320px;height:11px;"></div>
<span class="t" style="left:214.5px;top:307.8px;">Arrived</span>
<div class="fw" style="left:213px;top:317px;width:311px;height:19px;"></div>
<span class="t" style="left:216px;top:321.8px;">Normal healthy patient</span>
<div class="sc" style="left:523.5px;top:317px;width:9.5px;height:19px;"></div>
<svg style="position:absolute;left:525.85px;top:320.3px" width="4.8" height="3" viewBox="0 0 48 30"><path d="M0 30L24 0L48 30Z" fill="#a2a2a2"/></svg>
<svg style="position:absolute;left:525.85px;top:329.6px" width="4.8" height="3" viewBox="0 0 48 30"><path d="M0 0L24 30L48 0Z" fill="#a2a2a2"/></svg>
<div class="" style="left:213px;top:337.6px;width:320px;height:12px;background:#fff;border:1px solid #cfcfcf;border-radius:1px"></div>
<svg style="position:absolute;left:525px;top:293px" width="6" height="4" viewBox="0 0 6 4"><path d="M0.5 0.5L3 3L5.5 0.5" fill="none" stroke="#777" stroke-width="0.8"/></svg>
<svg style="position:absolute;left:525px;top:306.5px" width="6" height="4" viewBox="0 0 6 4"><path d="M0.5 0.5L3 3L5.5 0.5" fill="none" stroke="#777" stroke-width="0.8"/></svg>
<svg style="position:absolute;left:525px;top:342px" width="6" height="4" viewBox="0 0 6 4"><path d="M0.5 0.5L3 3L5.5 0.5" fill="none" stroke="#777" stroke-width="0.8"/></svg>
<div class="er" style="left:534px;top:152.6px;width:17.6px;height:19.4px;"></div>
<svg style="position:absolute;left:537.6px;top:158.1px" width="10" height="8.5" viewBox="0 0 20 17"><path d="M9.6 0.8L19.2 8.8L12.4 15.2H6.4L0.8 10Z" fill="#fff" stroke="#d26464" stroke-width="2.1" stroke-linejoin="round"/><path d="M9.6 0.8L19.2 8.8L14.6 13L4.8 5.2Z" fill="#d26464"/><path d="M10 16.2H18.8" stroke="#d26464" stroke-width="1.7"/></svg>
<div class="er" style="left:534px;top:174.4px;width:17.6px;height:14.0px;"></div>
<svg style="position:absolute;left:537.6px;top:177.2px" width="10" height="8.5" viewBox="0 0 20 17"><path d="M9.6 0.8L19.2 8.8L12.4 15.2H6.4L0.8 10Z" fill="#fff" stroke="#d26464" stroke-width="2.1" stroke-linejoin="round"/><path d="M9.6 0.8L19.2 8.8L14.6 13L4.8 5.2Z" fill="#d26464"/><path d="M10 16.2H18.8" stroke="#d26464" stroke-width="1.7"/></svg>
<div class="er" style="left:534px;top:190.4px;width:17.6px;height:14.0px;"></div>
<svg style="position:absolute;left:537.6px;top:193.2px" width="10" height="8.5" viewBox="0 0 20 17"><path d="M9.6 0.8L19.2 8.8L12.4 15.2H6.4L0.8 10Z" fill="#fff" stroke="#d26464" stroke-width="2.1" stroke-linejoin="round"/><path d="M9.6 0.8L19.2 8.8L14.6 13L4.8 5.2Z" fill="#d26464"/><path d="M10 16.2H18.8" stroke="#d26464" stroke-width="1.7"/></svg>
<div class="er" style="left:534px;top:206.4px;width:17.6px;height:14.0px;"></div>
<svg style="position:absolute;left:537.6px;top:209.2px" width="10" height="8.5" viewBox="0 0 20 17"><path d="M9.6 0.8L19.2 8.8L12.4 15.2H6.4L0.8 10Z" fill="#fff" stroke="#d26464" stroke-width="2.1" stroke-linejoin="round"/><path d="M9.6 0.8L19.2 8.8L14.6 13L4.8 5.2Z" fill="#d26464"/><path d="M10 16.2H18.8" stroke="#d26464" stroke-width="1.7"/></svg>
<div class="er" style="left:534px;top:222.4px;width:17.6px;height:14.0px;"></div>
<svg style="position:absolute;left:537.6px;top:225.2px" width="10" height="8.5" viewBox="0 0 20 17"><path d="M9.6 0.8L19.2 8.8L12.4 15.2H6.4L0.8 10Z" fill="#fff" stroke="#d26464" stroke-width="2.1" stroke-linejoin="round"/><path d="M9.6 0.8L19.2 8.8L14.6 13L4.8 5.2Z" fill="#d26464"/><path d="M10 16.2H18.8" stroke="#d26464" stroke-width="1.7"/></svg>
<div class="er" style="left:534px;top:238.4px;width:17.6px;height:14.0px;"></div>
<svg style="position:absolute;left:537.6px;top:241.2px" width="10" height="8.5" viewBox="0 0 20 17"><path d="M9.6 0.8L19.2 8.8L12.4 15.2H6.4L0.8 10Z" fill="#fff" stroke="#d26464" stroke-width="2.1" stroke-linejoin="round"/><path d="M9.6 0.8L19.2 8.8L14.6 13L4.8 5.2Z" fill="#d26464"/><path d="M10 16.2H18.8" stroke="#d26464" stroke-width="1.7"/></svg>
<div class="er" style="left:534px;top:254.4px;width:17.6px;height:14.0px;"></div>
<svg style="position:absolute;left:537.6px;top:257.2px" width="10" height="8.5" viewBox="0 0 20 17"><path d="M9.6 0.8L19.2 8.8L12.4 15.2H6.4L0.8 10Z" fill="#fff" stroke="#d26464" stroke-width="2.1" stroke-linejoin="round"/><path d="M9.6 0.8L19.2 8.8L14.6 13L4.8 5.2Z" fill="#d26464"/><path d="M10 16.2H18.8" stroke="#d26464" stroke-width="1.7"/></svg>
<div class="er" style="left:534px;top:270px;width:17.6px;height:18px;"></div>
<svg style="position:absolute;left:537.6px;top:274.8px" width="10" height="8.5" viewBox="0 0 20 17"><path d="M9.6 0.8L19.2 8.8L12.4 15.2H6.4L0.8 10Z" fill="#fff" stroke="#d26464" stroke-width="2.1" stroke-linejoin="round"/><path d="M9.6 0.8L19.2 8.8L14.6 13L4.8 5.2Z" fill="#d26464"/><path d="M10 16.2H18.8" stroke="#d26464" stroke-width="1.7"/></svg>
<div class="er" style="left:533.4px;top:289px;width:17.8px;height:12.4px;border-color:#4a5a6a;border-radius:3px"></div>
<svg style="position:absolute;left:537px;top:291.2px" width="10.6" height="8" viewBox="0 0 10.6 8"><path d="M0.3 1H10.3M0.3 4H10.3M0.3 7H10.3" stroke="#2d4d7a" stroke-width="1.3"/></svg>
<div class="er" style="left:533.4px;top:302.6px;width:17.8px;height:12.0px;border-color:#4a5a6a;border-radius:3px"></div>
<svg style="position:absolute;left:537px;top:304.6px" width="10.6" height="8" viewBox="0 0 10.6 8"><path d="M0.3 1H10.3M0.3 4H10.3M0.3 7H10.3" stroke="#2d4d7a" stroke-width="1.3"/></svg>
<div class="radc" style="left:217px;top:362.1px;width:7.2px;height:7.2px;"></div>
<span class="t" style="left:226px;top:365.3px;">Screening</span>
<div class="rad" style="left:300.6px;top:362.1px;width:7.2px;height:7.2px;"></div>
<span class="t" style="left:309.6px;top:365.3px;">Surveillance</span>
<div class="rad" style="left:384.2px;top:362.1px;width:7.2px;height:7.2px;"></div>
<span class="t" style="left:393.2px;top:365.3px;">Diagnostic</span>
<div class="rad" style="left:467.7px;top:362.1px;width:7.2px;height:7.2px;"></div>
<span class="t" style="left:476.7px;top:365.3px;">N/A</span>
<span class="t" style="left:217px;top:379px;">gFOBT</span>
<span class="t" style="left:323.8px;top:379px;">FIT</span>
<div class="" style="left:237px;top:379.5px;width:82px;height:21px;border-top:1px solid #e4e4e4;border-right:1px solid #e4e4e4"></div>
<div class="" style="left:333px;top:379.5px;width:92.5px;height:21px;border-top:1px solid #e4e4e4;border-right:1px solid #e4e4e4"></div>
<div class="radc" style="left:217px;top:387.4px;width:7.2px;height:7.2px;"></div>
<span class="t" style="left:225.7px;top:390.6px;">Negative</span>
<div class="rad" style="left:268px;top:387.4px;width:7.2px;height:7.2px;"></div>
<span class="t" style="left:276.2px;top:390.6px;">Positive</span>
<div class="radc" style="left:323.8px;top:387.4px;width:7.2px;height:7.2px;"></div>
<span class="t" style="left:332.40000000000003px;top:390.6px;">Negative</span>
<div class="rad" style="left:374.3px;top:387.4px;width:7.2px;height:7.2px;"></div>
<span class="t" style="left:382.8px;top:390.6px;">Positive</span>
<div class="fw" style="left:213px;top:403px;width:746px;height:22.4px;"></div>
<span class="t" style="left:216px;top:408.2px;">Screening Colonoscopy.</span>
<div class="sc" style="left:950px;top:403px;width:9px;height:21.8px;"></div>
<svg style="position:absolute;left:952.1px;top:406.3px" width="4.8" height="3" viewBox="0 0 48 30"><path d="M0 30L24 0L48 30Z" fill="#a2a2a2"/></svg>
<svg style="position:absolute;left:952.1px;top:418.4px" width="4.8" height="3" viewBox="0 0 48 30"><path d="M0 0L24 30L48 0Z" fill="#a2a2a2"/></svg>
<div class="fw" style="left:213px;top:427px;width:728px;height:22.6px;"></div>
<div class="sc" style="left:932px;top:427px;width:9px;height:22.0px;"></div>
<svg style="position:absolute;left:934.1px;top:430.3px" width="4.8" height="3" viewBox="0 0 48 30"><path d="M0 30L24 0L48 30Z" fill="#a2a2a2"/></svg>
<svg style="position:absolute;left:934.1px;top:442.6px" width="4.8" height="3" viewBox="0 0 48 30"><path d="M0 0L24 30L48 0Z" fill="#a2a2a2"/></svg>
<div class="fw" style="left:213px;top:451.4px;width:746px;height:23.0px;"></div>
<span class="t" style="left:216px;top:457.4px;">With endo.</span>
<div class="sc" style="left:950px;top:451.4px;width:9px;height:22.4px;"></div>
<svg style="position:absolute;left:952.1px;top:454.7px" width="4.8" height="3" viewBox="0 0 48 30"><path d="M0 30L24 0L48 30Z" fill="#a2a2a2"/></svg>
<svg style="position:absolute;left:952.1px;top:467.4px" width="4.8" height="3" viewBox="0 0 48 30"><path d="M0 0L24 30L48 0Z" fill="#a2a2a2"/></svg>
<div class="fw" style="left:213px;top:476px;width:746px;height:27.6px;"></div>
<span class="t" style="left:216px;top:481.4px;">CF-HQ190L 109</span>
<div class="sc" style="left:950px;top:476px;width:9px;height:27.0px;"></div>
<svg style="position:absolute;left:952.1px;top:479.3px" width="4.8" height="3" viewBox="0 0 48 30"><path d="M0 30L24 0L48 30Z" fill="#a2a2a2"/></svg>
<svg style="position:absolute;left:952.1px;top:496.6px" width="4.8" height="3" viewBox="0 0 48 30"><path d="M0 0L24 30L48 0Z" fill="#a2a2a2"/></svg>
<div class="" style="left:213px;top:507px;width:745px;height:13px;background:#fff;border:1px solid #d0d0d0;border-top-color:#e8e8e8"></div>
<div class="er" style="left:942px;top:431px;width:17px;height:17px;"></div>
<svg style="position:absolute;left:945.6px;top:435.3px" width="10" height="8.5" viewBox="0 0 20 17"><path d="M9.6 0.8L19.2 8.8L12.4 15.2H6.4L0.8 10Z" fill="#fff" stroke="#d26464" stroke-width="2.1" stroke-linejoin="round"/><path d="M9.6 0.8L19.2 8.8L14.6 13L4.8 5.2Z" fill="#d26464"/><path d="M10 16.2H18.8" stroke="#d26464" stroke-width="1.7"/></svg>
<div class="lb" style="left:553.4px;top:152.6px;width:59px;height:12.8px;overflow:hidden;border-radius:4.6px;"><span class="lt" style="left:28.5px;top:5.4px;">Date/Time</span></div>
<div class="lb" style="left:553.4px;top:167px;width:59px;height:21px;overflow:hidden;border-radius:6px;"><span class="lt" style="left:28.5px;top:9.5px;">Date of<br>Referral</span></div>
<div class="lg" style="left:553.4px;top:190px;width:59px;height:18px;overflow:hidden;border-radius:6px;"><span class="lt" style="left:28.5px;top:8.0px;">Visit Type</span></div>
<div class="lb" style="left:553.4px;top:210.4px;width:59px;height:32.6px;overflow:hidden;border-radius:6px;"><span class="lt" style="left:28.5px;top:15.3px;">Referring<br>Physician</span></div>
<div class="lg" style="left:553.4px;top:245px;width:59px;height:12px;overflow:hidden;border-radius:4.3px;"><span class="lt" style="left:28.5px;top:5.0px;">Facility</span></div>
<div class="lg" style="left:553.4px;top:259px;width:59px;height:11.4px;overflow:hidden;border-radius:4.1px;"><span class="lt" style="left:28.5px;top:4.7px;">Department</span></div>
<div class="lg" style="left:553.4px;top:272.4px;width:59px;height:14.0px;overflow:hidden;border-radius:5.0px;"><span class="lt" style="left:28.5px;top:6.0px;">Order/Visit #</span></div>
<div class="lg" style="left:553.4px;top:288.6px;width:59px;height:13.8px;overflow:hidden;border-radius:5.0px;"><span class="lt" style="left:28.5px;top:5.9px;">Accession #</span></div>
<div class="lg" style="left:553.4px;top:304.4px;width:59px;height:14.2px;overflow:hidden;border-radius:5.1px;"><span class="lt" style="left:28.5px;top:6.1px;">Proc. Planned</span></div>
<div class="lg" style="left:553.4px;top:320.6px;width:59px;height:24.8px;overflow:hidden;border-radius:6px;"><span class="lt" style="left:28.5px;top:11.4px;">Other Details</span></div>
<div class="lg" style="left:553.4px;top:351.4px;width:59px;height:22.2px;overflow:hidden;border-radius:6px;"><span class="lt" style="left:28.5px;top:10.1px;">Last<br>Colonoscopy</span></div>
<span class="t" style="left:613px;top:157px;">3/31/2026</span>
<span class="t" style="left:652px;top:157px;">11:13 AM</span>
<div class="er" style="left:685.4px;top:152.6px;width:15.2px;height:12.8px;border:.8px solid #787878;border-radius:3px"></div>
<div class="lb" style="left:704.2px;top:152.5px;width:38.6px;height:12.8px;border-radius:3.5px"></div>
<span class="lt" style="left:723.4px;top:158.9px;font-size:9px">Arr. Time</span>
<span class="t" style="left:743px;top:157px;">10:38 AM</span>
<div class="er" style="left:786.4px;top:152.6px;width:15.2px;height:12.8px;border:.8px solid #787878;border-radius:3px"></div>
<svg style="position:absolute;left:689.2px;top:154.8px" width="7.4" height="8.2" viewBox="0 0 7.4 8.2"><circle cx="3.7" cy="4.6" r="3.3" fill="#1a5a9e"/><rect x="2.9" y="0.2" width="1.6" height="1.6" fill="#1a5a9e"/><path d="M6 1.4L6.8 2.2" stroke="#1a5a9e" stroke-width="0.9"/><path d="M3.7 4.8V2.9" stroke="#cfe0f2" stroke-width="0.8"/></svg>
<svg style="position:absolute;left:790.3px;top:154.8px" width="7.4" height="8.2" viewBox="0 0 7.4 8.2"><circle cx="3.7" cy="4.6" r="3.3" fill="#1a5a9e"/><rect x="2.9" y="0.2" width="1.6" height="1.6" fill="#1a5a9e"/><path d="M6 1.4L6.8 2.2" stroke="#1a5a9e" stroke-width="0.9"/><path d="M3.7 4.8V2.9" stroke="#cfe0f2" stroke-width="0.8"/></svg>
<div class="" style="left:613px;top:166.4px;width:47px;height:21px;background:#f8f8f8;border-top:1px solid #cfcfcf"></div>
<span class="t" style="left:613px;top:176.9px;">3/12/2026</span>
<div class="" style="left:613px;top:188.4px;width:138px;height:0.8px;background:#e2e2e2"></div>
<span class="t" style="left:664px;top:170.5px;background:#f8f8f8">Patient Delay</span>
<div class="" style="left:660px;top:171px;width:90px;height:17px;border:1px solid #e0e0e0;border-top:none"></div>
<div class="rad" style="left:664.4px;top:177.4px;width:7.2px;height:7.2px;"></div>
<span class="t" style="left:673.6px;top:180.6px;">Yes</span>
<div class="rad" style="left:707px;top:177.4px;width:7.2px;height:7.2px;"></div>
<span class="t" style="left:715.8px;top:180.6px;">No</span>
<div class="fw" style="left:751px;top:168px;width:208.5px;height:19.5px;"></div>
<div class="sc" style="left:950.5px;top:168px;width:9px;height:19px;"></div>
<svg style="position:absolute;left:952.6px;top:171.3px" width="4.8" height="3" viewBox="0 0 48 30"><path d="M0 30L24 0L48 30Z" fill="#a2a2a2"/></svg>
<svg style="position:absolute;left:952.6px;top:180.6px" width="4.8" height="3" viewBox="0 0 48 30"><path d="M0 0L24 30L48 0Z" fill="#a2a2a2"/></svg>
<div class="rad" style="left:616.4px;top:198.8px;width:7.2px;height:7.2px;"></div>
<span class="t" style="left:625.0px;top:202.0px;">IP</span>
<div class="radc" style="left:660.7px;top:198.8px;width:7.2px;height:7.2px;"></div>
<span class="t" style="left:669.5px;top:202.0px;">OP</span>
<div class="rad" style="left:705px;top:198.8px;width:7.2px;height:7.2px;"></div>
<span class="t" style="left:713.7px;top:202.0px;">ER</span>
<div class="fw" style="left:751px;top:188px;width:208.5px;height:20.5px;"></div>
<div class="sc" style="left:950.5px;top:188px;width:9px;height:20px;"></div>
<svg style="position:absolute;left:952.6px;top:191.3px" width="4.8" height="3" viewBox="0 0 48 30"><path d="M0 30L24 0L48 30Z" fill="#a2a2a2"/></svg>
<svg style="position:absolute;left:952.6px;top:201.6px" width="4.8" height="3" viewBox="0 0 48 30"><path d="M0 0L24 30L48 0Z" fill="#a2a2a2"/></svg>
<div class="fw" style="left:613px;top:210.4px;width:327px;height:33px;border-right:1px solid #c8c8c8;border-top:1px solid #d8d8d8"></div>
<svg style="position:absolute;left:615.5px;top:212.8px" width="4" height="6"><path d="M0 0L3 3L0 6Z" fill="#000"/></svg>
<span class="t" style="left:621px;top:215.8px;">Acosta Timothy</span>
<div class="" style="left:942.2px;top:210px;width:16.2px;height:14.5px;background:#fff;border:.9px solid #707070;border-radius:7px"></div>
<svg style="position:absolute;left:946px;top:212.4px" width="8.4" height="9.2" viewBox="0 0 8.4 9.2"><circle cx="4.2" cy="2.2" r="2.1" fill="#1d5a9a"/><path d="M0.2 9.2C0.2 6.4 1.6 5.2 4.2 5.2S8.2 6.4 8.2 9.2Z" fill="#1d5a9a"/><path d="M2 7.6H6.4" stroke="#9fc0e0" stroke-width="0.7"/></svg>
<div class="" style="left:942.2px;top:227.6px;width:16.2px;height:14.6px;background:#fff;border:.9px solid #707070;border-radius:7px"></div>
<div class="" style="left:948px;top:234.4px;width:5px;height:1.6px;background:#000"></div>
<div class="" style="left:613px;top:244.4px;width:327px;height:12.8px;background:#fff;border:1px solid #d4d4d4;border-radius:1.5px"></div>
<span class="t" style="left:614.5px;top:251px;">Endovault Medical Center</span>
<svg style="position:absolute;left:932px;top:249px" width="6" height="4" viewBox="0 0 6 4"><path d="M0.5 0.5L3 3L5.5 0.5" fill="none" stroke="#777" stroke-width="0.8"/></svg>
<div class="" style="left:613px;top:258.6px;width:327px;height:12.2px;background:#fff;border:1px solid #d4d4d4;border-radius:1.5px"></div>
<span class="t" style="left:614.5px;top:265px;">Gastroenterology</span>
<svg style="position:absolute;left:932px;top:263px" width="6" height="4" viewBox="0 0 6 4"><path d="M0.5 0.5L3 3L5.5 0.5" fill="none" stroke="#777" stroke-width="0.8"/></svg>
<div class="" style="left:615px;top:273.5px;width:79px;height:12px;background:#fff;border:1px solid #d4d4d4"></div>
<svg style="position:absolute;left:685px;top:277.5px" width="6" height="4" viewBox="0 0 6 4"><path d="M0.5 0.5L3 3L5.5 0.5" fill="none" stroke="#777" stroke-width="0.8"/></svg>
<div class="" style="left:696px;top:273.5px;width:244px;height:12px;background:#fff;border:1px solid #e0e0e0"></div>
<svg style="position:absolute;left:933px;top:277.5px" width="6" height="4" viewBox="0 0 6 4"><path d="M0.5 0.5L3 3L5.5 0.5" fill="none" stroke="#bbb" stroke-width="0.8"/></svg>
<div class="er" style="left:943.6px;top:272.7px;width:16px;height:13.2px;border-color:#6a6a6a;border-radius:4px"></div>
<span class="t" style="left:951.6px;top:279.6px;font-size:7px;font-weight:bold;color:#222;transform:translate(-50%,-50%)">..</span>
<div class="fg" style="left:613px;top:289px;width:320px;height:13px;"></div>
<div class="" style="left:933px;top:289px;width:7px;height:13px;background:#f0f0f0"></div>
<svg style="position:absolute;left:934px;top:293.5px" width="6" height="4" viewBox="0 0 6 4"><path d="M0.5 0.5L3 3L5.5 0.5" fill="none" stroke="#ccc" stroke-width="0.8"/></svg>
<div class="er" style="left:943.6px;top:289px;width:16px;height:13.6px;border-color:#6a6a6a;border-radius:4px"></div>
<span class="t" style="left:951.6px;top:296px;font-size:7px;font-weight:bold;color:#222;transform:translate(-50%,-50%)">..</span>
<div class="" style="left:613px;top:305px;width:328px;height:13px;background:#fff;border:1px solid #cfcfcf"></div>
<span class="t" style="left:616px;top:312px;">Scheduled</span>
<svg style="position:absolute;left:934px;top:310px" width="6" height="4" viewBox="0 0 6 4"><path d="M0.5 0.5L3 3L5.5 0.5" fill="none" stroke="#777" stroke-width="0.8"/></svg>
<div class="er" style="left:943.6px;top:304.3px;width:16px;height:15.2px;border-color:#4a5a6a;border-radius:6px"></div>
<svg style="position:absolute;left:946.3px;top:307.9px" width="10.6" height="8" viewBox="0 0 10.6 8"><path d="M0.3 1H10.3M0.3 4H10.3M0.3 7H10.3" stroke="#2d4d7a" stroke-width="1.3"/></svg>
<div class="" style="left:614px;top:324.5px;width:51.5px;height:20.3px;border:1px solid #e2e2e2;border-left:none"></div>
<div class="" style="left:614px;top:321px;width:42.5px;height:7px;background:#f8f8f8"></div>
<span class="t" style="left:616.8px;top:324.7px;">Training Proc</span>
<div class="rad" style="left:616.4px;top:332.4px;width:7.2px;height:7.2px;"></div>
<span class="t" style="left:625.0px;top:335.6px;">Yes</span>
<div class="radc" style="left:640.5px;top:332.4px;width:7.2px;height:7.2px;"></div>
<span class="t" style="left:649.0px;top:335.6px;">No</span>
<div class="" style="left:668.3px;top:332px;width:6.6px;height:6.7px;border:.8px solid #555;background:#fff;border-radius:1.2px"></div>
<span class="t" style="left:676.9px;top:335.6px;">First Time Screening</span>
<div class="" style="left:616px;top:357.5px;width:52.6px;height:12px;background:#fff;border-bottom:1px solid #a0a0a0"></div>
<span class="t" style="left:617.7px;top:363.3px;">9/21/2012</span>
<div class="er" style="left:672.4px;top:356px;width:14.2px;height:14px;border:.8px solid #787878;border-radius:3.5px"></div>
<svg style="position:absolute;left:675.8px;top:359.2px" width="7.6" height="7.8" viewBox="0 0 7.6 7.8"><rect x="0" y="1" width="7.6" height="6.8" rx="0.9" fill="#1d3d6e"/><rect x="1.3" y="0" width="1.3" height="2" fill="#1d3d6e"/><rect x="5" y="0" width="1.3" height="2" fill="#1d3d6e"/><path d="M1.2 3.9H2.2M3.3 3.9H4.3M5.4 3.9H6.4M1.2 5.9H2.2M3.3 5.9H4.3M5.4 5.9H6.4" stroke="#fff" stroke-width="1"/></svg>
<div class="er" style="left:689px;top:356px;width:14px;height:14px;border:.8px solid #787878;border-radius:3.5px;background:#eef9ff"></div>
<svg style="position:absolute;left:690.6px;top:357.6px" width="10.8" height="10.8" viewBox="0 0 10.8 10.8"><circle cx="5.4" cy="5.4" r="4.5" fill="none" stroke="#2a4a7a" stroke-width="1.3"/><path d="M2.2 2.2L8.6 8.6" stroke="#2a4a7a" stroke-width="1.3"/></svg>
<div class="" style="left:706.8px;top:355.4px;width:52.6px;height:18px;border:1px solid #eaeaea;border-bottom:none"></div>
<div class="" style="left:709.8px;top:352px;width:46px;height:7px;background:#f8f8f8"></div>
<span class="t" style="left:710.8px;top:355.4px;">Completeness</span>
<div class="rad" style="left:711.2px;top:362.2px;width:7.2px;height:7.2px;"></div>
<span class="t" style="left:720.5px;top:365.40000000000003px;">Yes</span>
<div class="rad" style="left:735.4px;top:362.2px;width:7.2px;height:7.2px;"></div>
<span class="t" style="left:743.6999999999999px;top:365.40000000000003px;">No</span>
<div class="fw" style="left:760px;top:351.4px;width:199.5px;height:21.8px;"></div>
<div class="sc" style="left:950.5px;top:351.4px;width:9px;height:21.2px;"></div>
<svg style="position:absolute;left:952.6px;top:354.7px" width="4.8" height="3" viewBox="0 0 48 30"><path d="M0 30L24 0L48 30Z" fill="#a2a2a2"/></svg>
<svg style="position:absolute;left:952.6px;top:366.2px" width="4.8" height="3" viewBox="0 0 48 30"><path d="M0 0L24 30L48 0Z" fill="#a2a2a2"/></svg>
<div class="" style="left:146px;top:373.6px;width:813px;height:0.8px;background:#dedede"></div>
<div class="" style="left:553px;top:349px;width:406px;height:0.8px;background:#e6e6e6"></div>
<div class="" style="left:552.6px;top:152px;width:0.8px;height:222px;background:#e6e6e6"></div>
<div class="sb" style="left:960.6px;top:153px;width:57.6px;height:26.5px;"></div>
<svg style="position:absolute;left:985px;top:158.2px" width="8.3" height="7.3" viewBox="0 0 21 18"><path d="M1.6 0H9L13 4V16.4A1.6 1.6 0 0 1 11.4 18H1.6A1.6 1.6 0 0 1 0 16.4V1.6A1.6 1.6 0 0 1 1.6 0Z" fill="#fff"/><path d="M8.4 15.8L9.4 11.6L17.6 3.4L20.4 6.2L12.2 14.4Z" fill="#fff" stroke="#16a5e0" stroke-width="1.2"/><path d="M2 14.4C3.4 12 4.4 15.4 5.6 13.4" fill="none" stroke="#16a5e0" stroke-width="1"/></svg>
<span class="sbt" style="left:989.4px;top:171.3px;">Consent</span>
<div class="sb" style="left:960.6px;top:181.1px;width:57.6px;height:25.9px;"></div>
<svg style="position:absolute;left:985.8px;top:186px" width="6" height="7.4" viewBox="0 0 15 19"><path d="M2 0H9.5L15 5.5V17A2 2 0 0 1 13 19H2A2 2 0 0 1 0 17V2A2 2 0 0 1 2 0Z" fill="#fff"/><path d="M9.8 0.6V5.2H14.6" fill="none" stroke="#16a5e0" stroke-width="1.2"/><path d="M4 9H11M4 12H11M4 15H11" stroke="#16a5e0" stroke-width="1.4"/></svg>
<span class="sbt" style="left:989.4px;top:198.8px;">Pre Procedure</span>
<div class="sb" style="left:960.6px;top:208.6px;width:57.6px;height:26.2px;"></div>
<svg style="position:absolute;left:985px;top:211.3px" width="8" height="6.2" viewBox="0 0 20 15"><rect x="5.4" y="0" width="14.6" height="10.6" rx="1.6" fill="#fff"/><rect x="0.8" y="3.6" width="13.6" height="10.6" rx="1.6" fill="#fff" stroke="#16a5e0" stroke-width="1.6"/><path d="M3 12L6.4 8.4L8.6 10.6L10.4 9L12.6 12Z" fill="#16a5e0"/><circle cx="15.2" cy="4.4" r="1.7" fill="#16a5e0"/><path d="M11 7.4L13.4 5.2L17.4 8.6" fill="none" stroke="#16a5e0" stroke-width="1.2"/></svg>
<span class="sbt" style="left:989.4px;top:225.1px;">Image Capture<br>(6, 0)</span>
<div class="sb" style="left:960.6px;top:236.3px;width:57.6px;height:25.9px;"></div>
<svg style="position:absolute;left:985.2px;top:241.6px" width="7.6" height="6.1" viewBox="0 0 19 15"><rect x="2.2" y="0" width="14.6" height="11" rx="1.4" fill="#fff"/><rect x="4.4" y="2.2" width="10.2" height="6.6" fill="#16a5e0"/><path d="M9.5 3.2V7.8M7 5.5H12" stroke="#fff" stroke-width="1.5"/><path d="M0 12.4H19V13.4A1.6 1.6 0 0 1 17.4 15H1.6A1.6 1.6 0 0 1 0 13.4Z" fill="#fff"/></svg>
<span class="sbt" style="left:989.4px;top:253.4px;">Procedure Report</span>
<div class="sb" style="left:960.6px;top:264.5px;width:57.6px;height:25.2px;"></div>
<svg style="position:absolute;left:984.7px;top:268.8px" width="8.6" height="8.2" viewBox="0 0 20 19"><rect x="5.4" y="0" width="14.6" height="14" rx="2.6" fill="#fff"/><path d="M12.7 3.6V10.4M9.3 7H16.1" stroke="#16a5e0" stroke-width="2"/><path d="M1.2 4.6V15.2A2.6 2.6 0 0 0 3.8 17.8H14.4" fill="none" stroke="#fff" stroke-width="2.2" stroke-linecap="round"/></svg>
<span class="sbt" style="left:989.4px;top:282px;">Anesthesia Report</span>
<div class="sb" style="left:960.6px;top:292px;width:57.6px;height:25.6px;"></div>
<svg style="position:absolute;left:985.2px;top:293.5px" width="7.2" height="7.7" viewBox="0 0 17 18"><path d="M0.8 0.8H9.2V3H8V10.6A3 3 0 0 1 2 10.6V3H0.8Z" fill="#fff"/><rect x="3.8" y="2.6" width="2.4" height="3.4" fill="#16a5e0"/><circle cx="11.8" cy="12.6" r="5" fill="#fff" stroke="#16a5e0" stroke-width="1"/><path d="M9.4 12.8L11.2 14.6L14.4 11" fill="none" stroke="#16a5e0" stroke-width="1.5"/></svg>
<span class="sbt" style="left:989.4px;top:309.2px;">Pathology<br>Requisition</span>
<div class="sb" style="left:960.6px;top:319.8px;width:57.6px;height:25.3px;"></div>
<svg style="position:absolute;left:985.3px;top:324px" width="6.7" height="7.8" viewBox="0 0 15 18"><path d="M2 0H13A2 2 0 0 1 15 2V16A2 2 0 0 1 13 18H2A2 2 0 0 1 0 16V2A2 2 0 0 1 2 0Z" fill="#fff"/><path d="M4.6 3.4L8 6L4.6 8.6" fill="none" stroke="#16a5e0" stroke-width="1.5"/><path d="M9 8.6V12" stroke="#16a5e0" stroke-width="1.4"/></svg>
<span class="sbt" style="left:989.4px;top:337.5px;">Post Procedure</span>
<div class="sb" style="left:960.6px;top:347.2px;width:57.6px;height:25.8px;"></div>
<svg style="position:absolute;left:985.3px;top:348.7px" width="7" height="7.3" viewBox="0 0 17 17"><path d="M0.6 2.4L2 3.8L4.4 1M0.6 8.4L2 9.8L4.4 7" fill="none" stroke="#fff" stroke-width="1.5"/><rect x="1" y="13" width="3" height="3" fill="#fff"/><path d="M7 2.4H17M7 8.4H17M7 14.4H17" stroke="#fff" stroke-width="2.2"/></svg>
<span class="sbt" style="left:989.4px;top:364.2px;">Discharge<br>Instructions</span>
<div class="sb" style="left:960.6px;top:375px;width:57.6px;height:25.4px;"></div>
<svg style="position:absolute;left:984.9px;top:380.3px" width="7.1" height="7.4" viewBox="0 0 17 17"><rect x="0" y="0" width="17" height="17" rx="2.6" fill="#fff"/><path d="M4.4 6.6H12.6M4.4 10.6H12.6" stroke="#16a5e0" stroke-width="2.2"/></svg>
<span class="sbt" style="left:989.4px;top:393px;">Letter</span>
<div class="sb" style="left:960.6px;top:402.9px;width:57.6px;height:25.9px;"></div>
<svg style="position:absolute;left:985px;top:407px" width="7.5" height="8" viewBox="0 0 18 19"><path d="M2 0H8.5L13 4.5V16A2 2 0 0 1 11 18H2A2 2 0 0 1 0 16V2A2 2 0 0 1 2 0Z" fill="#fff"/><path d="M8.6 0.6V4.6H12.6" fill="none" stroke="#16a5e0" stroke-width="1.2"/><circle cx="12.6" cy="13.6" r="5" fill="#fff" stroke="#16a5e0" stroke-width="1.3"/><path d="M10.2 13.8L12 15.6L15.2 12" fill="none" stroke="#16a5e0" stroke-width="1.5"/></svg>
<span class="sbt" style="left:989.4px;top:420.8px;">Sign Off</span>
<div class="" style="left:0px;top:540px;width:1024px;height:10px;background:#fff;border-bottom:1px solid #999"></div>
<span class="t" style="left:3.5px;top:544.6px;font-size:7.1px;color:#4a4a4a;transform-origin:0 50%;transform:translateY(-50%) scaleX(.96)">3/31/2026</span>
<span class="t" style="left:56.5px;top:544.6px;font-size:7.1px;color:#4a4a4a;transform-origin:0 50%;transform:translateY(-50%) scaleX(.96)">2:47:06 PM</span>
<span class="t" style="left:170px;top:544.6px;font-size:7.1px;color:#4a4a4a">Scheduled</span>
<span class="t" style="left:261.5px;top:544.6px;font-size:7.1px;color:#4a4a4a">Pre Procedure Status: Not Finished</span>
<span class="t" style="left:386px;top:544.6px;font-size:7.1px;color:#4a4a4a">Username: SYSDBA SYSDBA</span>
<span class="t" style="left:508.5px;top:544.6px;font-size:7.1px;color:#4a4a4a">Facility: Endovault Medical Center</span>
<span class="t" style="left:631.5px;top:544.6px;font-size:7.1px;color:#4a4a4a">Department: Gastroenterology</span>
<span class="t" style="left:754px;top:544.6px;font-size:7.1px;color:#4a4a4a">Specialty: GI</span>
<div class="" style="left:54px;top:541px;width:1px;height:8px;background:#c8c8c8"></div>
<div class="" style="left:107px;top:541px;width:1px;height:8px;background:#c8c8c8"></div>
<div class="" style="left:123px;top:541px;width:1px;height:8px;background:#c8c8c8"></div>
<div class="" style="left:251px;top:541px;width:1px;height:8px;background:#c8c8c8"></div>
<div class="" style="left:384px;top:541px;width:1px;height:8px;background:#c8c8c8"></div>
<div class="" style="left:506px;top:541px;width:1px;height:8px;background:#c8c8c8"></div>
<div class="" style="left:629px;top:541px;width:1px;height:8px;background:#c8c8c8"></div>
<div class="" style="left:751.5px;top:541px;width:1px;height:8px;background:#c8c8c8"></div>
</body></html>
